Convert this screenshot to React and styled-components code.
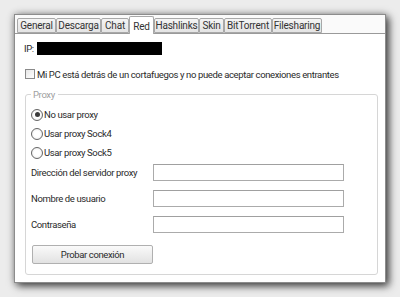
import React from 'react';
import styled, { createGlobalStyle } from 'styled-components';

const GlobalStyle = createGlobalStyle`
    html, body {
        margin: 0;
        padding: 0;
        background: #ececec;
    }
    body {
        font-family: Roboto, "Liberation Sans", sans-serif;
        font-size: 9.5px;
        letter-spacing: -0.37px;
        color: #2a2a2a;
    }
`;

const Page = styled.div`
    width: 400px;
    height: 297px;
    padding: 14px 0 0 14px;
    box-sizing: border-box;
`;

const Window = styled.div`
    width: 372px;
    height: 269px;
    box-sizing: border-box;
    background: #fff;
    border: 1px solid #8c8c8c;
    box-shadow: 3px 3px 8px rgba(0, 0, 0, 0.7), 0 0 7px rgba(0, 0, 0, 0.25);
    display: flex;
    flex-direction: column;
`;

const TabStrip = styled.div`
    display: flex;
    align-items: flex-end;
    padding: 1px 0 0 2px;
    height: 17px;
    background: #fafafa;
    border-bottom: 1px solid #9a9a9a;
`;

const Tab = styled.div`
    width: ${p => p.$w}px;
    flex: none;
    height: ${p => (p.$active ? 18 : 15)}px;
    margin-bottom: ${p => (p.$active ? -1 : 0)}px;
    box-sizing: border-box;
    border: 1px solid #a8a8a8;
    border-bottom: ${p => (p.$active ? 'none' : '1px solid #a8a8a8')};
    border-radius: 2px 2px 0 0;
    background: ${p => (p.$active ? '#fff' : 'linear-gradient(#f4f4f4, #e4e4e4)')};
    display: flex;
    align-items: center;
    justify-content: center;
    padding-top: ${p => (p.$active ? 1 : 0)}px;
    color: #333;
    font-size: 10px;
    letter-spacing: -0.2px;
    white-space: nowrap;
`;

const Body = styled.div`
    display: flex;
    flex-direction: column;
    padding: 0 7px 0 9px;
`;

const IpRow = styled.div`
    display: flex;
    align-items: center;
    height: 13px;
    margin-top: 8px;
    gap: 3px;
`;

const IpMask = styled.div`
    width: 125px;
    height: 13px;
    background: #000;
`;

const CheckRow = styled.label`
    display: flex;
    align-items: center;
    height: 12px;
    margin: 13px 0 0 1px;
    gap: 2px;
    white-space: nowrap;
`;

const CheckBox = styled.span`
    width: 10px;
    height: 10px;
    flex: none;
    box-sizing: border-box;
    border: 1px solid #8a8a8a;
    background: linear-gradient(135deg, #e6e6e6, #fff);
`;

const Group = styled.div`
    position: relative;
    margin: 14px 0 0 1px;
    border: 1px solid #d6d6d6;
    border-radius: 3px;
    padding: 13px 0 10px 5px;
    display: flex;
    flex-direction: column;
`;

const Legend = styled.span`
    position: absolute;
    top: -7px;
    left: 5px;
    padding: 0 3px 0 2px;
    background: #fff;
    color: #a0a0a0;
    line-height: 13px;
`;

const RadioRow = styled.label`
    display: flex;
    align-items: center;
    height: 13px;
    gap: 1px;
    margin-bottom: 6px;
`;

const Radio = styled.span`
    width: 12px;
    height: 12px;
    flex: none;
    box-sizing: border-box;
    border-radius: 50%;
    border: 1px solid #666;
    background: radial-gradient(circle, #fff 40%, #e4e4e4);
    display: flex;
    align-items: center;
    justify-content: center;
    &::after {
        content: '';
        width: 5px;
        height: 5px;
        border-radius: 50%;
        background: ${p => (p.$checked ? '#3a3a3a' : 'transparent')};
    }
`;

const FieldRow = styled.div`
    display: flex;
    align-items: center;
    height: 17px;
    margin-top: ${p => p.$top}px;
`;

const FieldLabel = styled.span`
    width: 122px;
    flex: none;
    white-space: nowrap;
`;

const TextBox = styled.div`
    width: 191px;
    height: 17px;
    flex: none;
    box-sizing: border-box;
    border: 1px solid #ababab;
    border-top-color: #a0a0a0;
    background: #fff;
`;

const Button = styled.div`
    width: 121px;
    height: 19px;
    box-sizing: border-box;
    margin: 12px 0 0 1px;
    border: 1px solid #b0b0b0;
    border-radius: 2px;
    background: linear-gradient(#fafafa, #e2e2e2);
    display: flex;
    align-items: center;
    justify-content: center;
`;

const tabs = [
    ['General', 39],
    ['Descarga', 45],
    ['Chat', 28],
    ['Red', 25],
    ['Hashlinks', 45],
    ['Skin', 25],
    ['BitTorrent', 48],
    ['Filesharing', 50],
];

const fields = ['Dirección del servidor proxy', 'Nombre de usuario', 'Contraseña'];

const App = () => {
    return (
        <Page>
            <GlobalStyle />
            <Window>
                <TabStrip>
                    {tabs.map(([name, w]) => (
                        <Tab key={name} $w={w} $active={name === 'Red'}>{name}</Tab>
                    ))}
                </TabStrip>
                <Body>
                    <IpRow>
                        <span>IP:</span>
                        <IpMask />
                    </IpRow>
                    <CheckRow>
                        <CheckBox />
                        Mi PC está detrás de un cortafuegos y no puede aceptar conexiones entrantes
                    </CheckRow>
                    <Group>
                        <Legend>Proxy</Legend>
                        <RadioRow><Radio $checked />No usar proxy</RadioRow>
                        <RadioRow><Radio />Usar proxy Sock4</RadioRow>
                        <RadioRow><Radio />Usar proxy Sock5</RadioRow>
                        {fields.map((f, i) => (
                            <FieldRow key={f} $top={i === 0 ? -1 : 9}>
                                <FieldLabel>{f}</FieldLabel>
                                <TextBox />
                            </FieldRow>
                        ))}
                        <Button>Probar conexión</Button>
                    </Group>
                </Body>
            </Window>
        </Page>
    );
};

export default App;
